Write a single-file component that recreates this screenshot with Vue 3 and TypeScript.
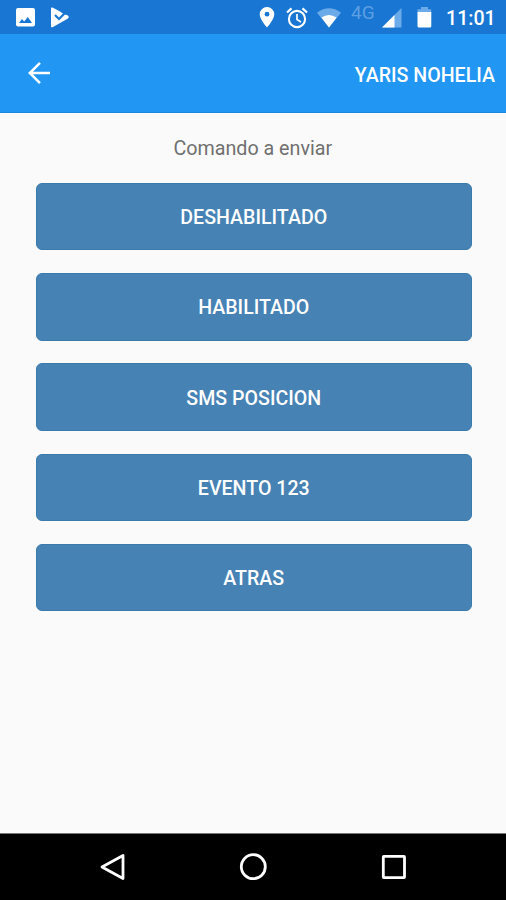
<script setup lang="ts">
const commands: string[] = ['DESHABILITADO', 'HABILITADO', 'SMS POSICION', 'EVENTO 123', 'ATRAS']
</script>

<template>
  <div class="screen">
    <div class="status-bar">
      <svg class="photo" width="19" height="19" viewBox="0 0 19 19">
        <rect width="19" height="18.5" rx="2" fill="#fff" />
        <path d="M3 15 6 11l2.2 2.5L11.8 9l4.2 6z" fill="#1976d2" />
      </svg>
      <svg class="play-check" width="19" height="21" viewBox="0 0 19 21">
        <path d="M0 1.5Q0 0 1.5.5L9 4.6 12.5 7 17 8.6Q18.6 10 17 11.6L2 20Q0 21 0 19z" fill="#fff" />
        <path d="M4 8 8 12 15.5 4.5" fill="none" stroke="#1976d2" stroke-width="2.2" />
        <path d="M13 4.6 15.4 7 17.6 5.2 15.6 3z" fill="#1976d2" />
      </svg>
      <svg class="pin" width="16" height="21" viewBox="0 0 16 21">
        <path d="M8 0a7.3 7.3 0 0 0-7.3 7.3C.7 12.5 8 20.5 8 20.5s7.3-8 7.3-13.2A7.3 7.3 0 0 0 8 0z" fill="#fff" />
        <circle cx="8" cy="7.2" r="2.4" fill="#1976d2" />
      </svg>
      <svg class="alarm" width="22" height="22" viewBox="0 0 22 22" fill="none" stroke="#fff">
        <circle cx="11" cy="12" r="8.1" stroke-width="2.1" />
        <path d="M1 5.5 5.5 1.4M21 5.5 16.5 1.4" stroke-width="2.2" />
        <path d="M11 7v5.5l4 2.5" stroke-width="1.7" />
      </svg>
      <svg class="wifi" width="24" height="20" viewBox="0 0 24 20">
        <path d="M0 4.7Q12-4 24 4.7L12 19.5z" fill="#6cabe9" />
        <path d="M4.4 9.6Q12 4.4 19.6 9.6L12 19.5z" fill="#fff" />
      </svg>
      <span class="network">4G</span>
      <svg class="signal" width="20" height="20" viewBox="0 0 20 20">
        <path d="M19.5 0v19.5H0z" fill="#6cabe9" />
        <path d="M12.5 7v12.5H0z" fill="#fff" />
      </svg>
      <svg class="battery" width="15" height="21" viewBox="0 0 15 21">
        <path d="M4 0h7v2.2h3.2V6H.5V2.2H4z" fill="#6cabe9" />
        <path d="M.5 5h13.8v14q0 1.5-1.5 1.5H2Q.5 20.5.5 19z" fill="#fff" />
      </svg>
      <span class="clock">11:01</span>
    </div>

    <header class="app-bar">
      <svg width="24" height="24" viewBox="0 0 24 24" fill="none" stroke="#fff" stroke-width="2.5">
        <path d="M23 12H3M13 1.8 2.8 12 13 22.2" />
      </svg>
      <h1>YARIS NOHELIA</h1>
    </header>

    <main>
      <p>Comando a enviar</p>
      <div class="commands">
        <button v-for="command in commands" :key="command" type="button">{{ command }}</button>
      </div>
    </main>

    <nav>
      <svg width="28" height="28" viewBox="0 0 28 28">
        <path d="M3 14 24 2.5v23z" />
      </svg>
      <svg width="28" height="28" viewBox="0 0 28 28">
        <circle cx="14.3" cy="13.7" r="12" />
      </svg>
      <svg width="28" height="28" viewBox="0 0 28 28">
        <rect x="4.3" y="3.4" width="21.2" height="21.2" rx=".5" />
      </svg>
    </nav>
  </div>
</template>

<style>
body {
  margin: 0;
}
</style>

<style scoped>
.screen {
  display: flex;
  flex-direction: column;
  width: 506px;
  height: 900px;
  background: #fafafa;
  font-family: Roboto, sans-serif;
  overflow: hidden;
}
svg {
  display: block;
  flex: none;
}
.status-bar {
  display: flex;
  align-items: flex-start;
  height: 27px;
  padding: 7px 0 0 16px;
  background: #1976d2;
  color: #fff;
}
.photo {
  margin-top: 1px;
}
.play-check {
  margin-left: 16px;
}
.pin {
  margin-left: 189px;
}
.alarm {
  margin-left: 11px;
}
.wifi {
  margin-left: 9px;
  margin-top: 1px;
}
.network {
  width: 31px;
  margin-left: 10px;
  font-size: 19px;
  line-height: 12px;
  color: #5c9fe2;
}
.signal {
  margin-top: 1px;
}
.battery {
  margin-left: 15px;
}
.clock {
  margin-left: 14px;
  font-size: 19.6px;
  line-height: 23px;
  font-weight: 500;
}
.app-bar {
  display: flex;
  align-items: center;
  justify-content: space-between;
  box-sizing: border-box;
  height: 79px;
  padding: 0 11px 1px 27px;
  background: #2196f3;
  border-bottom: 1px solid #1d86d9;
}
.app-bar h1 {
  margin: 5px 0 0;
  color: #fff;
  font-size: 19.6px;
  font-weight: 500;
}
main {
  flex: 1;
  padding: 23px 34.5px 0 36px;
}
p {
  margin: 0 2px 22px 0;
  text-align: center;
  color: #707070;
  font-size: 19.7px;
  line-height: 25px;
}
.commands {
  display: flex;
  flex-direction: column;
  gap: 22.8px;
}
button {
  height: 67.4px;
  padding: 3px 0 0;
  border: 1px solid #3a7bae;
  border-radius: 6px;
  background: #4682b4;
  color: #fff;
  font: 500 19.6px/24px Roboto, sans-serif;
}
nav {
  display: flex;
  justify-content: center;
  align-items: center;
  gap: 112px;
  height: 66px;
  border-top: 1px solid #777;
  background: #000;
}
nav svg {
  fill: none;
  stroke: #fff;
  stroke-width: 2.8;
  stroke-linejoin: round;
}
</style>
